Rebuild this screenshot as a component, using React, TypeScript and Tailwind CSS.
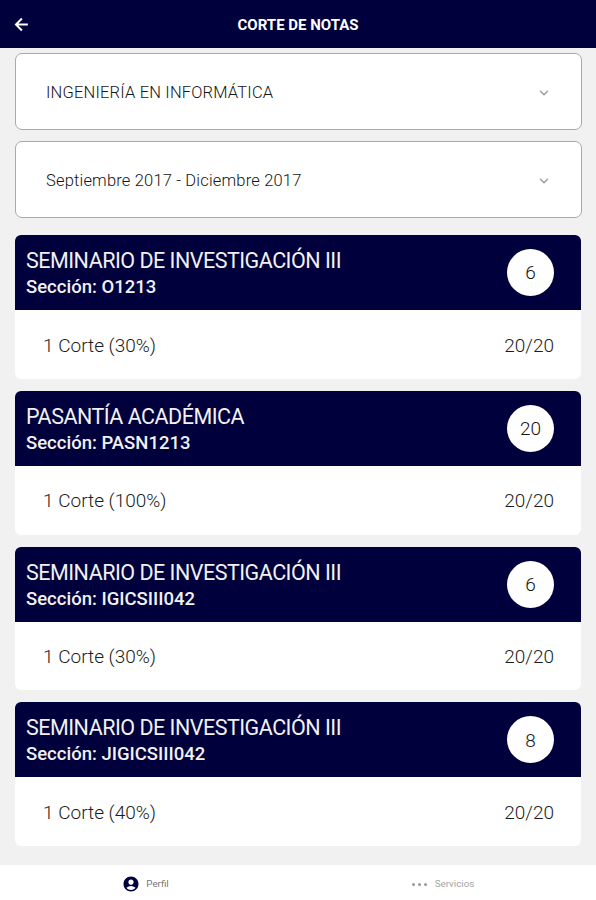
import React from "react";
import { ChevronDown } from "lucide-react";
import { MdAccountCircle } from "react-icons/md";

type Course = { name: string; section: string; total: string; cut: string; grade: string };

const courses: Course[] = [
  { name: "SEMINARIO DE INVESTIGACIÓN III", section: "O1213", total: "6", cut: "1 Corte (30%)", grade: "20/20" },
  { name: "PASANTÍA ACADÉMICA", section: "PASN1213", total: "20", cut: "1 Corte (100%)", grade: "20/20" },
  { name: "SEMINARIO DE INVESTIGACIÓN III", section: "IGICSIII042", total: "6", cut: "1 Corte (30%)", grade: "20/20" },
  { name: "SEMINARIO DE INVESTIGACIÓN III", section: "JIGICSIII042", total: "8", cut: "1 Corte (40%)", grade: "20/20" },
];

function SelectBox({ label }: { label: string }) {
  return (
    <button className="flex h-[77px] w-full items-center justify-between rounded-[7px] border border-[#a9a9ac] bg-white pt-[2px] pr-[30px] pl-[30px] text-left">
      <span className="text-[16.5px] leading-5 font-light tracking-[0.18px] text-[#151515]">{label}</span>
      <ChevronDown className="h-[14px] w-[14px] text-[#a0a0a0]" strokeWidth={2.8} />
    </button>
  );
}

function CourseCard({ course }: { course: Course }) {
  return (
    <article className="h-[143.8px] overflow-hidden rounded-[6px] bg-white">
      <header className="flex h-[75px] items-center justify-between bg-[#00003c] pr-[27px] pl-[11px] text-[#f1f1f1]">
        <div className="pt-[3px]">
          <h2 className="text-[21.5px] leading-[26px] font-normal tracking-[-0.5px]">{course.name}</h2>
          <p className="text-[18.5px] leading-[26px] font-medium">Sección: {course.section}</p>
        </div>
        <div className="flex h-[47px] w-[47px] items-center justify-center rounded-full bg-white pt-[2px] text-[19px] font-light text-[#151515]">
          {course.total}
        </div>
      </header>
      <div className="flex h-[69px] items-center justify-between pt-[2px] pr-[27px] pl-7 text-[19px] leading-6 font-light text-[#1c1c1c]">
        <span>{course.cut}</span>
        <span>{course.grade}</span>
      </div>
    </article>
  );
}

export default function App() {
  return (
    <div className="flex h-[900px] w-[596px] flex-col overflow-hidden bg-[#f1f1f1] font-['Roboto',sans-serif]">
      <header className="grid h-12 shrink-0 grid-cols-[1fr_auto_1fr] items-center bg-[#00003c] text-white">
        <svg viewBox="0 0 24 24" className="ml-[12px] h-[19px] w-[19px]" fill="none" stroke="currentColor" strokeWidth="2.5">
          <path d="M20 12H5.5M12.5 4.5L5 12l7.5 7.5" />
        </svg>
        <h1 className="pt-[2px] text-[15px] leading-5 font-bold">CORTE DE NOTAS</h1>
      </header>
      <main className="flex flex-1 flex-col pt-[5px] pr-[14px] pl-[15px]">
        <div className="flex flex-col gap-[11px]">
          <SelectBox label="INGENIERÍA EN INFORMÁTICA" />
          <SelectBox label="Septiembre 2017 - Diciembre 2017" />
        </div>
        <section className="mt-[17.1px] mr-[1px] flex flex-col gap-[12px]">
          {courses.map((course) => (
            <CourseCard key={course.section} course={course} />
          ))}
        </section>
      </main>
      <nav className="grid h-[35px] shrink-0 grid-cols-2 bg-white text-[9.8px]">
        <a className="flex items-center justify-center gap-[6px] pt-[3px] pr-[7px] text-[#77777b]">
          <MdAccountCircle className="h-[18px] w-[18px] text-[#00003c]" />
          <span>Perfil</span>
        </a>
        <a className="flex items-center justify-center gap-[8px] pt-[3px] pr-[8px] text-[#a2a6a4]">
          <span className="flex gap-[3px]">
            <i className="h-[3px] w-[3px] rounded-full bg-[#999]" />
            <i className="h-[3px] w-[3px] rounded-full bg-[#999]" />
            <i className="h-[3px] w-[3px] rounded-full bg-[#999]" />
          </span>
          <span>Servicios</span>
        </a>
      </nav>
    </div>
  );
}
